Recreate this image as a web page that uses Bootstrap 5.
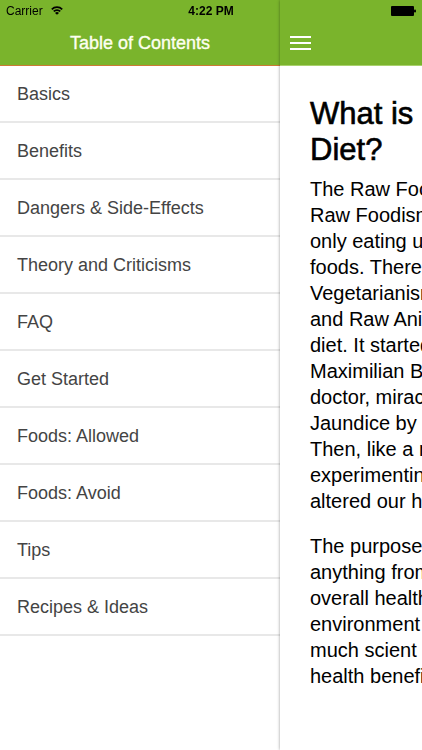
<!DOCTYPE html>
<html lang="en">
<head>
<meta charset="utf-8">
<meta name="viewport" content="width=device-width, initial-scale=1">
<title>Table of Contents</title>
<link rel="stylesheet" href="https://cdn.jsdelivr.net/npm/bootstrap@5.3.0/dist/css/bootstrap.min.css">
<style>
  :root { --leaf: #7ab42c; }
  body { font-family: "Liberation Sans", Arial, sans-serif; color: #000; }
  .status-bar { height: 20px; font-size: 12px; line-height: 20px; padding: 1px 6px 0; }
  .status-bar .side { flex: 1 1 0; }
  .drawer { width: 280px; }
  .top-bar { height: 66px; padding-top: 20px; background-color: var(--leaf); border-bottom: 1px solid #cc7a35; }
  .drawer-title { font-size: 18px; line-height: 24px; color: #fdfff0; -webkit-text-stroke: .02em currentColor; }
  .toc-link { height: 57px; padding: 2px 17px 0; font-size: 18px; color: #444; border-bottom: 2px solid #e8e8e8; }
  .page-panel { min-width: 0; box-shadow: 0 0 3px rgba(0, 0, 0, .4); z-index: 1; }
  .page-panel .top-bar { border-bottom-color: #a9d06c; padding-left: 10px; }
  .page-text { padding: 30px 0 0 30px; white-space: nowrap; font-size: 20px; line-height: 26px; }
  .page-text h1 { font-size: 31px; line-height: 36px; font-weight: 400; margin-bottom: 8px; -webkit-text-stroke: .02em currentColor; }
  .page-text p { margin-bottom: 19px; }
</style>
<script src="https://cdn.jsdelivr.net/npm/bootstrap@5.3.0/dist/js/bootstrap.bundle.min.js"></script>
</head>
<body>
<div class="status-bar fixed-top d-flex align-items-center">
  <div class="side d-flex align-items-center gap-2">
    <span>Carrier</span>
    <svg width="12" height="9" viewBox="0 0 13 10" fill="none" stroke="#000" aria-label="Wi-Fi" role="img">
      <path d="M.7 3.7a8.200 8.200 0 0 1 11.600 0" stroke-width="1.900"/>
      <path d="M2.900 6a5 5 0 0 1 7.200 0" stroke-width="1.900"/>
      <path d="M6.500 9.800 4.300 7.700a3.100 3.100 0 0 1 4.400 0z" fill="#000" stroke="none"/>
    </svg>
  </div>
  <span class="clock fw-bold">4:22 PM</span>
  <div class="side d-flex justify-content-end">
    <svg width="25" height="10" viewBox="0 0 25 10" aria-label="Battery full" role="img">
      <rect width="23" height="10" rx="1"/>
      <rect x="23" y="3.500" width="2" height="3" rx="1"/>
    </svg>
  </div>
</div>
<div class="d-flex min-vh-100 overflow-hidden">
  <nav class="drawer flex-shrink-0 bg-white" aria-label="Table of Contents">
    <header class="top-bar d-flex align-items-center justify-content-center">
      <h2 class="drawer-title m-0 fw-normal">Table of Contents</h2>
    </header>
    <div class="d-flex flex-column">
      <a class="toc-link d-flex align-items-center text-decoration-none" href="#basics">Basics</a>
      <a class="toc-link d-flex align-items-center text-decoration-none" href="#benefits">Benefits</a>
      <a class="toc-link d-flex align-items-center text-decoration-none" href="#dangers">Dangers &amp; Side-Effects</a>
      <a class="toc-link d-flex align-items-center text-decoration-none" href="#theory">Theory and Criticisms</a>
      <a class="toc-link d-flex align-items-center text-decoration-none" href="#faq">FAQ</a>
      <a class="toc-link d-flex align-items-center text-decoration-none" href="#start">Get Started</a>
      <a class="toc-link d-flex align-items-center text-decoration-none" href="#allowed">Foods: Allowed</a>
      <a class="toc-link d-flex align-items-center text-decoration-none" href="#avoid">Foods: Avoid</a>
      <a class="toc-link d-flex align-items-center text-decoration-none" href="#tips">Tips</a>
      <a class="toc-link d-flex align-items-center text-decoration-none" href="#recipes">Recipes &amp; Ideas</a>
    </div>
  </nav>
  <main class="page-panel flex-grow-1 bg-white">
    <header class="top-bar d-flex align-items-center">
      <button class="btn p-0 border-0 d-flex" type="button" aria-label="Menu">
        <svg width="21" height="16" viewBox="0 0 21 16" fill="#fff">
          <rect y="1" width="21" height="2"/><rect y="7" width="21" height="2"/><rect y="13" width="21" height="2"/>
        </svg>
      </button>
    </header>
    <article class="page-text overflow-hidden">
      <h1>What is<br>Diet?</h1>
      <p>The Raw Food<br>Raw Foodism<br>only eating un<br>foods. There<br>Vegetarianism<br>and Raw Anim<br>diet. It started<br>Maximilian B<br>doctor, mirac<br>Jaundice by<br>Then, like a m<br>experimenting<br>altered our h</p>
      <p>The purpose<br>anything from<br>overall health<br>environment<br>much scient<br>health benefi</p>
    </article>
  </main>
</div>
</body>
</html>
